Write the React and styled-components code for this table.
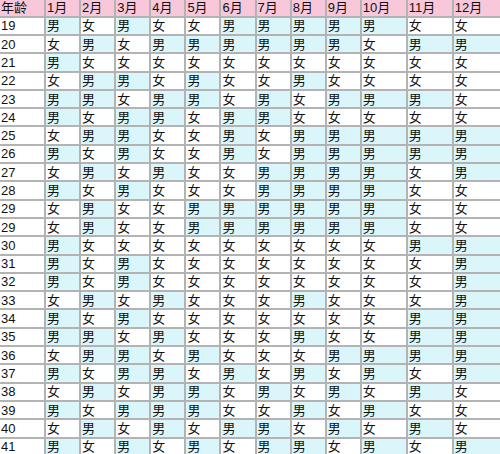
import React from "react";
import styled, { createGlobalStyle } from "styled-components";

const GlobalStyle = createGlobalStyle`
  html, body {
    margin: 0;
    padding: 0;
    background: #ffffff;
    overflow: hidden;
  }
`;

const MONTHS = ["1月", "2月", "3月", "4月", "5月", "6月", "7月", "8月", "9月", "10月", "11月", "12月"];

// age -> gender for each month, 男 = M, 女 = F
const ROWS = [
  ["19", "MFMFFMMMMMFF"],
  ["20", "FMFMMMMMMFMM"],
  ["21", "MFFFFFFFFFFF"],
  ["22", "FMMFMFFMFFFF"],
  ["23", "MMFMMFMFMMMF"],
  ["24", "MFMMFMMFFFFF"],
  ["25", "FMMFFMFMMMMM"],
  ["26", "MFMFFMFMMMMM"],
  ["27", "FMFMFFMMMMFM"],
  ["28", "MFMFFFMMMMFF"],
  ["29", "FMFFMMMMMMFF"],
  ["29", "FMFFMMMMMMFF"],
  ["30", "MFFFFFFFFFMM"],
  ["31", "MFMFFFFFFFFM"],
  ["32", "MFMFFFFFFFFM"],
  ["33", "FMFMFFFMFFFM"],
  ["34", "MFMFFFFFFFMM"],
  ["35", "MMFMFFFMFFMM"],
  ["36", "FMMFMFFFMMMM"],
  ["37", "MFMMFMFMFMFM"],
  ["38", "FMFMMFMFMFMF"],
  ["39", "MFMMMFFMFMFF"],
  ["40", "FMFMFMMFMFMF"],
  ["41", "MFMFMFMMFMFM"],
];

const Table = styled.div`
  width: 500px;
  display: grid;
  grid-template-columns: 44px repeat(9, 33.1px) 44px 44px 1fr;
  grid-template-rows: 15.7px;
  grid-auto-rows: 16.3px;
  gap: 2px;
  background: #b3b3b3;
  font-family: "Liberation Sans", "Noto Sans CJK SC", sans-serif;
  font-size: 13px;
  color: #111;
`;

const Cell = styled.div`
  display: flex;
  align-items: center;
  padding-left: 1px;
  overflow: hidden;
  white-space: nowrap;
  line-height: 1;
  background: ${(p) =>
    p.$kind === "head" ? "#f8c8da" : p.$kind === "boy" ? "#daf6fa" : "#ffffff"};
`;

const Head = styled(Cell)`
  font-size: 13px;
`;

export default function App() {
  return (
    <>
      <GlobalStyle />
      <Table>
        <Head $kind="head">年龄</Head>
        {MONTHS.map((m) => (
          <Head key={m} $kind="head">
            {m}
          </Head>
        ))}
        {ROWS.map(([age, pattern], r) => (
          <React.Fragment key={r}>
            <Cell $kind="age">{age}</Cell>
            {pattern.split("").map((g, c) => (
              <Cell key={c} $kind={g === "M" ? "boy" : "girl"}>
                {g === "M" ? "男" : "女"}
              </Cell>
            ))}
          </React.Fragment>
        ))}
      </Table>
    </>
  );
}
